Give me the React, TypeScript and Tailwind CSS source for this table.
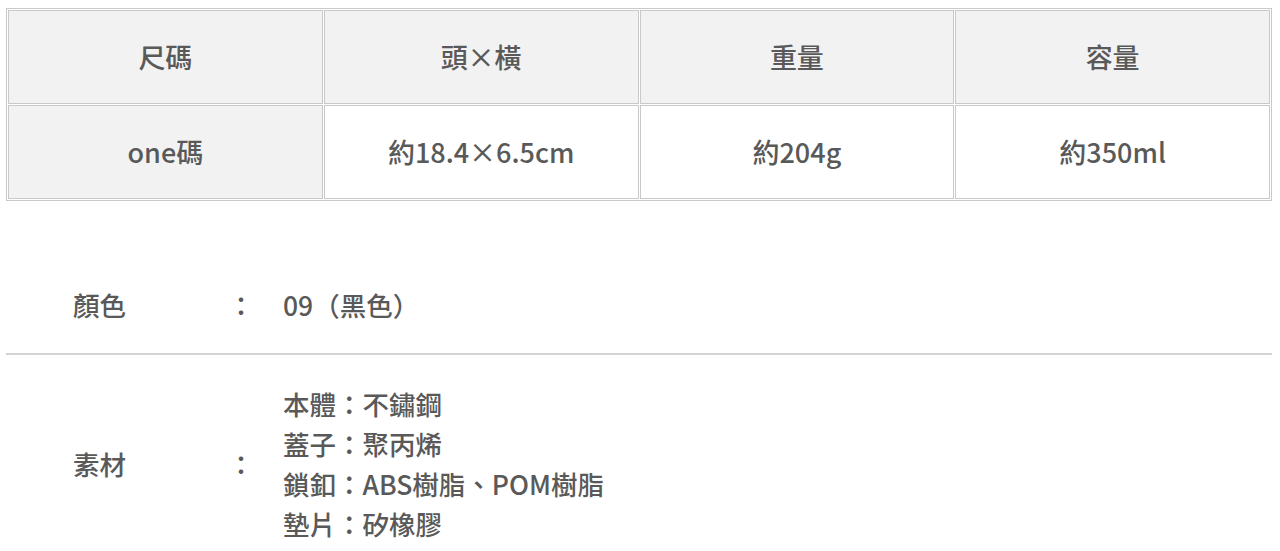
import React from "react";

const font = { fontFamily: '"Noto Sans CJK TC", "Noto Sans", sans-serif' };

function Cell({ children, gray }: { children: React.ReactNode; gray?: boolean }) {
  return (
    <div
      className={`h-[94px] flex items-center justify-center border border-[#c9c9c9] text-[27px] leading-[40px] font-medium text-[#595959] ${
        gray ? "bg-[#f2f2f2]" : "bg-white"
      }`}
    >
      {children}
    </div>
  );
}

export default function App() {
  const materials = ["本體：不鏽鋼", "蓋子：聚丙烯", "鎖釦：ABS樹脂、POM樹脂", "墊片：矽橡膠"];
  return (
    <div className="bg-white w-[1280px] min-h-[551px] pl-[6px] pr-[8px] pt-[8px]" style={font}>
      <div className="border border-[#c9c9c9] p-px bg-white">
        <div className="grid grid-cols-4 gap-px">
          <Cell gray>尺碼</Cell>
          <Cell gray>頭×橫</Cell>
          <Cell gray>重量</Cell>
          <Cell gray>容量</Cell>
          <Cell gray>one碼</Cell>
          <Cell>約18.4×6.5cm</Cell>
          <Cell>約204g</Cell>
          <Cell>約350ml</Cell>
        </div>
      </div>

      <div className="mt-[56px] text-[26.5px] leading-[40px] font-medium text-[#595959]">
        <div className="flex items-center py-[28px] border-b-2 border-[#d4d4d4]">
          <div className="w-[221px] pl-[67px]">顏色</div>
          <div className="w-[28px] text-center">：</div>
          <div className="pl-[28px]">09（黑色）</div>
        </div>
        <div className="flex items-center pt-[29px] pb-[20px]">
          <div className="w-[221px] pl-[67px]">素材</div>
          <div className="w-[28px] text-center">：</div>
          <div className="pl-[28px] flex flex-col">
            {materials.map((m) => (
              <div key={m}>{m}</div>
            ))}
          </div>
        </div>
      </div>
    </div>
  );
}
